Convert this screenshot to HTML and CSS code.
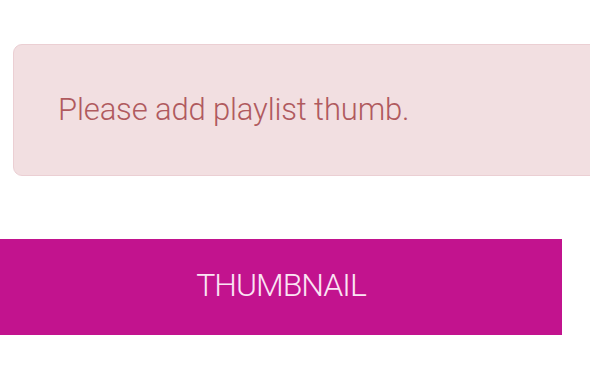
FILE: index.html
```html
<!DOCTYPE html>
<html>
<head>
<meta charset="utf-8">
<link rel="stylesheet" href="styles.css">
</head>
<body>
<main class="page">
  <div class="alert">Please add playlist thumb.</div>
  <button class="btn-thumb" type="button">THUMBNAIL</button>
</main>
</body>
</html>
```
FILE: styles.css
```css
html, body {
  margin: 0;
  padding: 0;
  background: #ffffff;
  overflow: hidden;
}
.page {
  width: 590px;
  height: 380px;
  overflow: hidden;
  display: flex;
  flex-direction: column;
  align-items: flex-start;
  font-family: Roboto, "Liberation Sans", sans-serif;
}
.alert {
  box-sizing: border-box;
  margin: 44px 0 0 13px;
  width: 600px;
  flex-shrink: 0;
  height: 132px;
  display: flex;
  align-items: center;
  padding: 0 0 2px 44px;
  background: #f2dfe1;
  border: 1.5px solid #ebcfd3;
  border-radius: 9px;
  color: #b05a5e;
  font-size: 31px;
  font-weight: 300;
  letter-spacing: -0.15px;
}
.btn-thumb {
  box-sizing: border-box;
  margin-top: 63px;
  width: 562px;
  height: 96px;
  border: none;
  background: #c2138e;
  color: #fbe4f4;
  font-family: Roboto, "Liberation Sans", sans-serif;
  font-size: 32px;
  font-weight: 300;
  letter-spacing: -1px;
  padding: 0 0 4px 0;
  text-align: center;
}
```
